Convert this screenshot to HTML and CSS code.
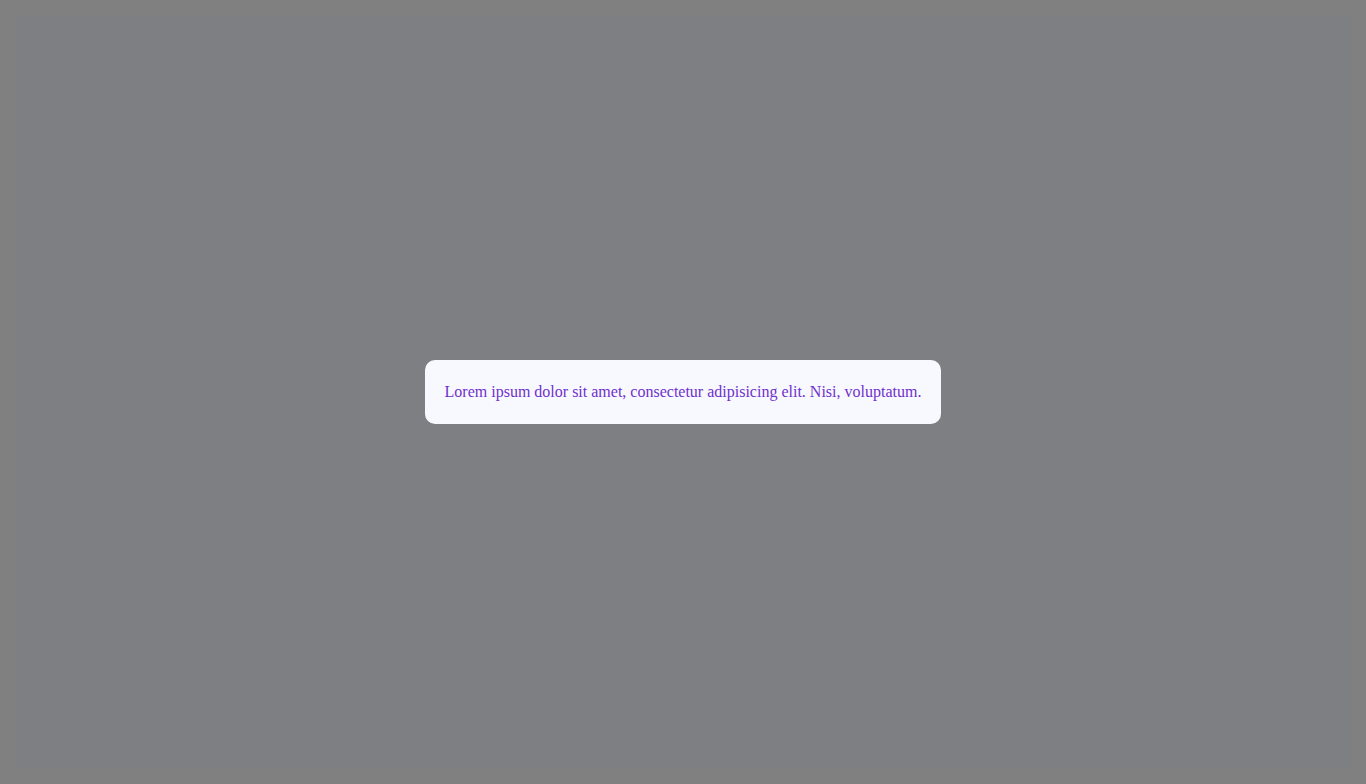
FILE: index.html
```html
<!DOCTYPE html>
<html>
<head>
<meta charset="utf-8">
<link rel="stylesheet" href="styles.css">
</head>
<body>
<div class="page"></div>
<div class="overlay">
  <div class="modal">
    <p class="modal-text">Lorem ipsum dolor sit amet, consectetur adipisicing elit. Nisi, voluptatum.</p>
  </div>
</div>
</body>
</html>
```
FILE: styles.css
```css
html, body {
  margin: 0;
  height: 100%;
  background: #808080;
}
body {
  padding: 15px;
  box-sizing: border-box;
  font-family: "Liberation Serif", serif;
}
.page {
  height: 100%;
  background: #7e7f82;
}
.overlay {
  position: fixed;
  inset: 0;
  background: transparent;
  display: flex;
  align-items: center;
  justify-content: center;
}
.modal {
  background: #f8f9ff;
  border-radius: 10px;
  padding: 20px 20px;
  box-sizing: border-box;
  height: 64px;
  display: flex;
  align-items: center;
}
.modal-text {
  margin: 0;
  font-size: 16px;
  line-height: 24px;
  color: #6f30cc;
  white-space: nowrap;
}
```
